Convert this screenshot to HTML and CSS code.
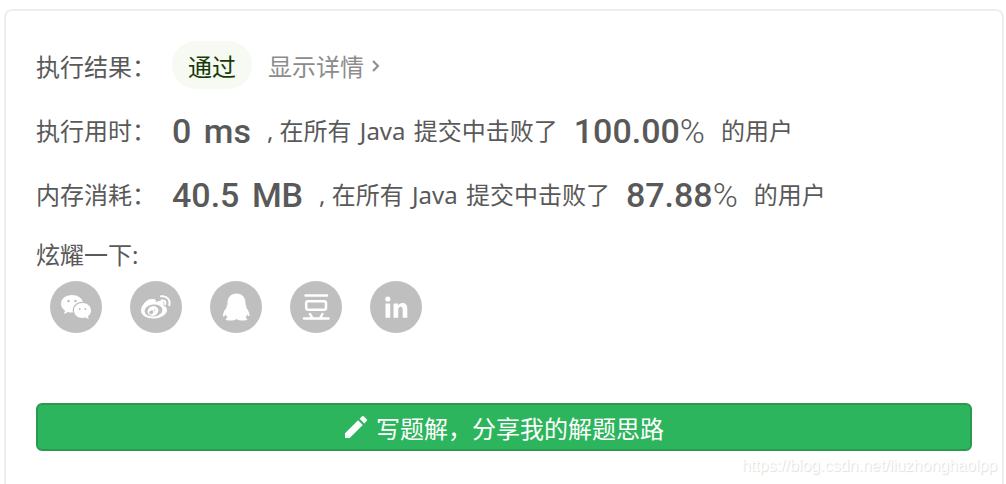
FILE: index.html
```html
<!DOCTYPE html>
<html lang="zh-CN">
<head>
<meta charset="utf-8">
<title>执行结果</title>
<link rel="stylesheet" href="styles.css">
</head>
<body>
<main class="card">
  <div class="row">
    <span class="label">执行结果：</span>
    <span class="badge">通过</span>
    <a class="details" href="#">显示详情<svg class="chevron" viewBox="0 0 10 14" aria-hidden="true"><path d="M2 1l5 5-5 5"/></svg></a>
  </div>
  <div class="row">
    <span class="label">执行用时：</span>
    <strong class="value">0 <span class="unit">ms</span></strong>
    <span class="text">, 在所有 <span class="lang">Java</span> 提交中击败了</span>
    <strong class="value">100.00<span class="percent">%</span></strong>
    <span class="text">的用户</span>
  </div>
  <div class="row">
    <span class="label">内存消耗：</span>
    <strong class="value">40.5 <span class="unit">MB</span></strong>
    <span class="text">, 在所有 <span class="lang">Java</span> 提交中击败了</span>
    <strong class="value">87.88<span class="percent">%</span></strong>
    <span class="text">的用户</span>
  </div>
  <div class="share-title">炫耀一下:</div>
  <div class="share">
    <button class="share-button" type="button" aria-label="微信">
      <svg viewBox="0 0 52 52"><path class="fill" d="M22 14c-6.100 0-11 3.900-11 8.800 0 2.800 1.600 5.200 4 6.800l-1 3.400 4-2.100c1.200.4 2.600.6 4 .6h1c-1.500-6 3.500-11 10-10.700C32 17 27.500 14 22 14z"/><path class="fill" d="M32.500 22c-4.900 0-8.500 3.400-8.500 7.500s3.600 7.500 8.500 7.500c1.200 0 2.200-.2 3.200-.5l3 1.700-.7-3c1.900-1.400 3-3.400 3-5.700 0-4.100-3.600-7.500-8.500-7.500z"/><g class="hole"><circle cx="18.500" cy="20" r="1.300"/><circle cx="25.500" cy="20" r="1.300"/><circle cx="29.700" cy="28" r="1"/><circle cx="35.300" cy="28" r="1"/></g></svg>
    </button>
    <button class="share-button" type="button" aria-label="微博">
      <svg viewBox="0 0 52 52"><path class="fill" d="M22 18c-4-1-11 6-11 11.500C11 34.500 17 37.500 23.500 37.500c8 0 13.500-4.500 13.500-8.500 0-2.600-2-3.800-3.700-4.400.8-2.200.4-3.900-1.300-4.400-1.900-.5-4.300.2-6.300 1C26.500 19 25.500 18 22 18z"/><ellipse class="hole" cx="23.500" cy="29.500" rx="9" ry="6" transform="rotate(-7 23.500 29.500)"/><ellipse class="fill" cx="23" cy="30" rx="5.500" ry="4.800" transform="rotate(-20 23 30)"/><ellipse class="hole" cx="21.300" cy="31.300" rx="2.200" ry="1.800" transform="rotate(-25 21.300 31.300)"/><circle class="hole" cx="24.700" cy="29" r=".8"/><path class="line arc" d="M31 15.300c5.500-1 9.800 3.400 8.300 9M31.500 19.600c3-.6 4.500 1.200 3.700 3.700"/></svg>
    </button>
    <button class="share-button" type="button" aria-label="QQ">
      <svg viewBox="0 0 52 52"><path class="fill" d="M26.500 12.500c-5.500 0-9 4-9 9.200l.1 1.600c-.9 1-1.300 2-1 3.200-2 2.500-3.500 5.200-3.600 7.700 0 2.200 1.500 1.300 2.800-.8.400 1.200 1 2.200 1.900 3.100-3 1-2.600 3 2 3 3 0 5.500-.5 6.800-1.500 1.300 1 3.800 1.500 6.800 1.500 4.600 0 5-2 2-3 .9-.9 1.500-1.900 1.900-3.100 1.300 2.100 2.300 2.300 2.300.3-.1-2.500-1.500-4.700-3.200-7 .3-1.200 0-2.300-.8-3.200v-1.800c0-5.200-3.500-9.200-9-9.200z"/></svg>
    </button>
    <button class="share-button" type="button" aria-label="豆瓣">
      <svg viewBox="0 0 52 52"><path class="line" d="M15.500 14.500h21.500M14 37.500h24.500M20 33l2 3.500M32.500 33l-2 3.500"/><rect class="line" x="16.200" y="20.200" width="19.800" height="8.500" rx="2"/></svg>
    </button>
    <button class="share-button" type="button" aria-label="LinkedIn">
      <svg viewBox="0 0 52 52"><circle class="fill" cx="17.800" cy="18" r="2.600"/><path class="fill" d="M15.500 22.500h4.700v14.300h-4.700zM23.500 22.500H28v2c1-1.500 2.500-2.400 4.500-2.400 3.700 0 4.800 2.400 4.800 6v8.700h-4.600v-7.800c0-1.900-.3-3.200-2-3.200-1.800 0-2.500 1.300-2.500 3.200v7.800h-4.700z"/></svg>
    </button>
  </div>
  <button class="write" type="button">
    <svg class="pencil" viewBox="0 0 24 24" aria-hidden="true"><path d="M1 18.300V23h4.700L18.800 9.900l-4.700-4.700zM22.500 6.200c.7-.7.7-1.500 0-2.200L20 1.500c-.7-.7-1.500-.7-2.200 0l-2.200 2.200 4.700 4.700z"/></svg>
    <span>写题解，分享我的解题思路</span>
  </button>
</main>
<div class="watermark">https://blog.csdn.net/liuzhonghaolpp</div>
</body>
</html>
```
FILE: styles.css
```css
* {
  box-sizing: border-box;
}

body {
  margin: 0;
  padding: 9px 2px 0 4px;
  min-height: 100vh;
  display: flex;
  flex-direction: column;
  overflow: hidden;
  background: #fff;
  color: #595959;
  font: 24px/32px "Noto Sans", "Noto Sans CJK SC", sans-serif;
}

.card {
  flex: 1;
  padding: 30px;
  border: 2px solid #eee;
  border-bottom: 0;
  border-radius: 8px 8px 0 0;
}

.row {
  display: flex;
  align-items: center;
  height: 48px;
  margin-bottom: 16px;
  white-space: nowrap;
}

.label {
  width: 136px;
  padding-top: 4px;
}

.badge {
  padding: 10px 16px 6px;
  border-radius: 24px;
  background: #f7faf3;
  color: #173b08;
}

.details {
  display: flex;
  align-items: center;
  margin-left: 16px;
  padding-top: 4px;
  color: #8c8c8c;
  text-decoration: none;
}

.chevron {
  width: 10px;
  height: 14px;
  margin-left: 7px;
  fill: none;
  stroke: currentColor;
  stroke-width: 2;
}

.value {
  margin-right: 16px;
  padding-top: 4px;
  font: 500 34px/40px Roboto, sans-serif;
}

.unit {
  margin-left: 4px;
}

.text {
  margin-right: 16px;
  padding-top: 4px;
}

.lang {
  margin: 0 2px;
}

.percent {
  font-weight: 300;
}

.share-title {
  margin-top: 22px;
}

.share {
  display: flex;
  gap: 28px;
  margin: 10px 0 70px;
  padding-left: 14px;
}

.share-button {
  width: 52px;
  height: 52px;
  padding: 0;
  border: 0;
  border-radius: 50%;
  background: #bfbfbf;
}

.share-button svg {
  display: block;
}

.fill {
  fill: #fff;
}

.hole {
  fill: #bfbfbf;
}

.line {
  fill: none;
  stroke: #fff;
  stroke-width: 2.5;
  stroke-linecap: round;
}

.arc {
  stroke-width: 2;
}

.write {
  display: flex;
  align-items: center;
  justify-content: center;
  gap: 8px;
  width: 100%;
  height: 48px;
  padding: 0;
  border: 2px solid #2d9850;
  border-radius: 6px;
  background: #2db55d;
  color: #fff;
  font: inherit;
}

.write span {
  padding-top: 4px;
}

.pencil {
  width: 24px;
  height: 24px;
  fill: currentColor;
}

.watermark {
  position: absolute;
  right: 9px;
  bottom: 6px;
  color: #fff;
  font: 16px/24px "Liberation Sans", Arial, sans-serif;
  text-shadow: 1px 1px 1px #ddd;
}
```
